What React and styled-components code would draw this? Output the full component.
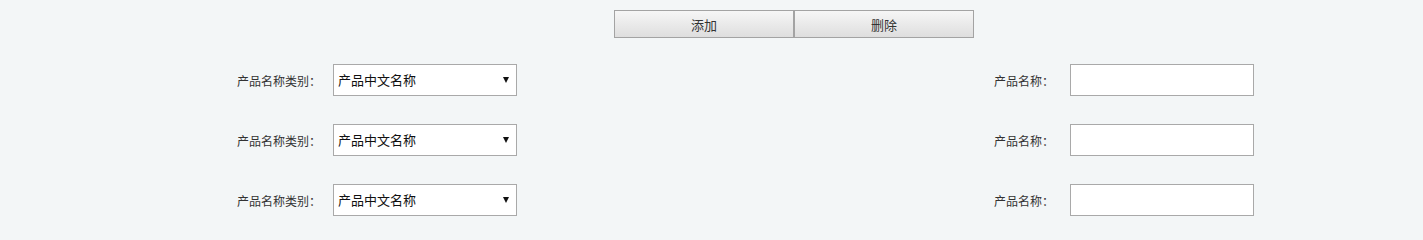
import React from "react";
import styled, { createGlobalStyle } from "styled-components";

const GlobalStyle = createGlobalStyle`
    html, body {
        margin: 0;
        padding: 0;
        background: #f3f6f7;
        font-family: "Noto Sans CJK SC", "Noto Sans", sans-serif;
        color: #333;
        overflow: hidden;
    }
`;

const Page = styled.div`
    width: 1423px;
    height: 228px;
    padding-top: 10px;
    box-sizing: border-box;
    overflow: hidden;
`;

const Toolbar = styled.div`
    display: flex;
    margin-left: 614px;
`;

const ToolButton = styled.button`
    width: 180px;
    height: 28px;
    margin: 0;
    padding: 0;
    border: 1px solid #a3a3a3;
    background: linear-gradient(to bottom, #f6f6f6, #dedede);
    font-family: inherit;
    font-size: 13px;
    color: #333;
    cursor: pointer;
`;

const Rows = styled.div`
    display: flex;
    flex-direction: column;
    gap: 28px;
    margin-top: 26px;
    padding: 0 169px 0 237px;
`;

const Row = styled.div`
    display: flex;
    justify-content: space-between;
    align-items: center;
    height: 32px;
`;

const Field = styled.div`
    display: flex;
    align-items: center;
    gap: ${(p) => p.$gap}px;
`;

const Label = styled.label`
    font-size: 12px;
    color: #333;
    white-space: nowrap;
`;

const SelectWrap = styled.div`
    position: relative;
    width: 184px;
    height: 32px;

    &::after {
        content: "";
        position: absolute;
        right: 8px;
        top: 13px;
        border-left: 3px solid transparent;
        border-right: 3px solid transparent;
        border-top: 6px solid #111;
        pointer-events: none;
    }
`;

const Select = styled.select`
    appearance: none;
    width: 100%;
    height: 100%;
    box-sizing: border-box;
    margin: 0;
    padding: 0 0 1px 4px;
    border: 1px solid #a9a9a9;
    border-radius: 0;
    background: #fff;
    font-family: inherit;
    font-size: 13px;
    color: #111;
    outline: none;
`;

const TextInput = styled.input`
    width: 184px;
    height: 32px;
    box-sizing: border-box;
    margin: 0;
    padding: 0 4px;
    border: 1px solid #a9a9a9;
    background: #fff;
    font-family: inherit;
    font-size: 13px;
    outline: none;
`;

const rows = [1, 2, 3];

export default function App() {
    return (
        <Page>
            <GlobalStyle />
            <Toolbar>
                <ToolButton>添加</ToolButton>
                <ToolButton>删除</ToolButton>
            </Toolbar>
            <Rows>
                {rows.map((n) => (
                    <Row key={n}>
                        <Field $gap={12}>
                            <Label>产品名称类别：</Label>
                            <SelectWrap>
                                <Select defaultValue="cn">
                                    <option value="cn">产品中文名称</option>
                                    <option value="en">产品英文名称</option>
                                </Select>
                            </SelectWrap>
                        </Field>
                        <Field $gap={16}>
                            <Label>产品名称：</Label>
                            <TextInput type="text" />
                        </Field>
                    </Row>
                ))}
            </Rows>
        </Page>
    );
}
